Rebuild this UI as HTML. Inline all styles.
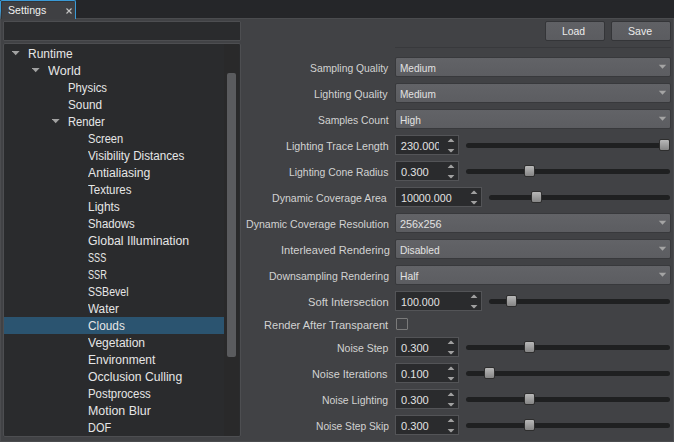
<!DOCTYPE html>
<html><head><meta charset="utf-8"><style>
html,body{margin:0;padding:0;}
body{width:674px;height:442px;position:relative;overflow:hidden;background:#414245;font-family:"Liberation Sans", sans-serif;}
.t{position:absolute;white-space:nowrap;line-height:normal;transform-origin:0 0;}
.tabbar{position:absolute;left:0;top:0;width:674px;height:18px;background:#252629;}
.tab{position:absolute;left:0;top:0;width:74px;height:18px;background:#3f4043;border:1px solid #3a9ad6;border-bottom:none;border-radius:2px 2px 0 0;box-shadow:inset 1px 1px 0 #333437;box-sizing:border-box;width:76px;height:19px;}
.win{position:absolute;left:0;top:18px;width:674px;height:424px;box-sizing:border-box;border:1px solid #4b4c4f;}
.search{position:absolute;left:3px;top:21px;width:238px;height:20px;box-sizing:border-box;background:#2a2b2d;border:1px solid #4d4e51;border-radius:1px;}
.tree{position:absolute;left:3px;top:43px;width:238px;height:394px;box-sizing:border-box;background:#2a2b2d;border:1px solid #4d4e51;border-radius:2px;overflow:hidden;}
.track{position:absolute;left:224px;top:44px;width:15px;height:392px;background:#29292a;}
.sbh{position:absolute;left:227px;top:73px;width:9px;height:284px;background:#5a5b5e;border-radius:2px;}
.tri{position:absolute;width:0;height:0;border-left:4px solid transparent;border-right:4px solid transparent;border-top:4px solid #a4a4a4;}
.btn{position:absolute;top:21px;width:60px;height:20px;box-sizing:border-box;background:linear-gradient(#606165,#5b5c60);border:1px solid #343538;border-radius:2px;}
.sep{position:absolute;left:395px;top:47px;width:276px;height:1px;background:#38393c;}
.combo{position:absolute;left:395px;width:276px;height:20px;box-sizing:border-box;background:linear-gradient(#626367,#5c5d61);border:1px solid #38393c;border-radius:2px;}
.carr{position:absolute;left:263px;top:7px;width:0;height:0;border-left:4px solid transparent;border-right:4px solid transparent;border-top:4px solid #a6a6a6;}
.spin{position:absolute;left:395px;height:20px;box-sizing:border-box;background:#2a2b2d;border:1px solid #535457;}
.up,.dn{position:absolute;right:4px;width:0;height:0;border-left:3.5px solid transparent;border-right:3.5px solid transparent;}
.up{top:2px;border-bottom:4px solid #a0a0a0;}
.dn{top:12px;border-top:4px solid #a0a0a0;}
.arr{position:absolute;}
.groove{position:absolute;height:5px;background:#1f2021;border-radius:2.5px;}
.handle{position:absolute;width:11px;height:12px;box-sizing:border-box;background:linear-gradient(#b8b8b8,#858585);border:1px solid #2e2e2e;border-radius:2px;}
.chk{position:absolute;left:396px;width:12px;height:12px;box-sizing:border-box;border:1px solid #7a7a7a;border-radius:1px;background:#404144;}
</style></head><body>
<div class="tabbar"></div>
<div class="win"></div>
<div class="tab"></div><div style="position:absolute;left:0;top:1px;width:1px;height:18px;background:linear-gradient(#3a9ad6 0%,#3a9ad6 55%,#4b5a66 100%)"></div>
<div class="t" style="left:7.8px;top:4px;font-size:11px;color:#f0f0f0;transform:scaleX(0.9616);">Settings</div>
<svg style="position:absolute;left:65px;top:7px" width="8" height="8"><path d="M1.5 1.5L6.5 6.5M6.5 1.5L1.5 6.5" stroke="#c4c4c4" stroke-width="1.1"/></svg>
<div class="search"></div>
<div class="tree"></div>
<div class="track"></div>
<div class="sbh"></div>
<div class="btn" style="left:545px"></div>
<div class="btn" style="left:611px"></div>
<div class="t" style="left:562.4px;top:25px;font-size:11px;color:#ececec;transform:scaleX(0.9444);">Load</div>
<div class="t" style="left:628.3px;top:25px;font-size:11px;color:#ececec;transform:scaleX(0.9617);">Save</div>
<div class="sep"></div>
<svg class="arr" style="left:12px;top:51px" width="9" height="6"><polygon points="-0.2,0 7.6,0 3.7,4.2" fill="#a2a2a2"/></svg>
<div class="t" style="left:28.0px;top:47px;font-size:12px;color:#e6e6e6;">Runtime</div>
<svg class="arr" style="left:32px;top:68px" width="9" height="6"><polygon points="-0.2,0 7.6,0 3.7,4.2" fill="#a2a2a2"/></svg>
<div class="t" style="left:48.0px;top:64px;font-size:12px;color:#e6e6e6;transform:scaleX(1.0511);">World</div>
<div class="t" style="left:68.0px;top:81px;font-size:12px;color:#e6e6e6;transform:scaleX(0.9433);">Physics</div>
<div class="t" style="left:68.0px;top:98px;font-size:12px;color:#e6e6e6;transform:scaleX(0.9816);">Sound</div>
<svg class="arr" style="left:52px;top:119px" width="9" height="6"><polygon points="-0.2,0 7.6,0 3.7,4.2" fill="#a2a2a2"/></svg>
<div class="t" style="left:68.0px;top:115px;font-size:12px;color:#e6e6e6;transform:scaleX(0.9349);">Render</div>
<div class="t" style="left:88.0px;top:132px;font-size:12px;color:#e6e6e6;transform:scaleX(0.9238);">Screen</div>
<div class="t" style="left:88.0px;top:149px;font-size:12px;color:#e6e6e6;transform:scaleX(0.9723);">Visibility Distances</div>
<div class="t" style="left:88.0px;top:166px;font-size:12px;color:#e6e6e6;transform:scaleX(1.0165);">Antialiasing</div>
<div class="t" style="left:88.0px;top:183px;font-size:12px;color:#e6e6e6;transform:scaleX(0.9592);">Textures</div>
<div class="t" style="left:88.0px;top:200px;font-size:12px;color:#e6e6e6;transform:scaleX(0.9931);">Lights</div>
<div class="t" style="left:88.0px;top:217px;font-size:12px;color:#e6e6e6;transform:scaleX(0.9460);">Shadows</div>
<div class="t" style="left:88.0px;top:234px;font-size:12px;color:#e6e6e6;transform:scaleX(1.0250);">Global Illumination</div>
<div class="t" style="left:88.0px;top:251px;font-size:12px;color:#e6e6e6;transform:scaleX(0.7581);">SSS</div>
<div class="t" style="left:88.0px;top:268px;font-size:12px;color:#e6e6e6;transform:scaleX(0.7638);">SSR</div>
<div class="t" style="left:88.0px;top:285px;font-size:12px;color:#e6e6e6;transform:scaleX(0.8818);">SSBevel</div>
<div class="t" style="left:88.0px;top:302px;font-size:12px;color:#e6e6e6;transform:scaleX(0.9758);">Water</div>
<div style="position:absolute;left:4px;top:317px;width:220px;height:17px;background:#2b5470"></div>
<div class="t" style="left:88.0px;top:319px;font-size:12px;color:#e6e6e6;transform:scaleX(0.9852);">Clouds</div>
<div class="t" style="left:88.0px;top:336px;font-size:12px;color:#e6e6e6;transform:scaleX(1.0063);">Vegetation</div>
<div class="t" style="left:88.0px;top:353px;font-size:12px;color:#e6e6e6;">Environment</div>
<div class="t" style="left:88.0px;top:370px;font-size:12px;color:#e6e6e6;transform:scaleX(1.0159);">Occlusion Culling</div>
<div class="t" style="left:88.0px;top:387px;font-size:12px;color:#e6e6e6;transform:scaleX(0.9511);">Postprocess</div>
<div class="t" style="left:88.0px;top:404px;font-size:12px;color:#e6e6e6;transform:scaleX(1.0347);">Motion Blur</div>
<div class="t" style="left:88.0px;top:421px;font-size:12px;color:#e6e6e6;transform:scaleX(0.9120);">DOF</div>
<div class="t" style="left:309.7px;top:62px;font-size:11px;color:#d2d2d2;transform:scaleX(0.9408);">Sampling Quality</div>
<div class="combo" style="top:57px"></div><svg class="arr" style="left:658px;top:64px" width="10" height="6"><polygon points="0.8,0.8 8.2,0.8 4.5,4.8" fill="#a4a4a4"/></svg>
<div class="t" style="left:399.6px;top:62px;font-size:11px;color:#e2e2e2;transform:scaleX(0.9138);">Medium</div>
<div class="t" style="left:314.4px;top:88px;font-size:11px;color:#d2d2d2;transform:scaleX(0.9696);">Lighting Quality</div>
<div class="combo" style="top:83px"></div><svg class="arr" style="left:658px;top:90px" width="10" height="6"><polygon points="0.8,0.8 8.2,0.8 4.5,4.8" fill="#a4a4a4"/></svg>
<div class="t" style="left:399.6px;top:88px;font-size:11px;color:#e2e2e2;transform:scaleX(0.9138);">Medium</div>
<div class="t" style="left:317.8px;top:114px;font-size:11px;color:#d2d2d2;transform:scaleX(0.9395);">Samples Count</div>
<div class="combo" style="top:109px"></div><svg class="arr" style="left:658px;top:116px" width="10" height="6"><polygon points="0.8,0.8 8.2,0.8 4.5,4.8" fill="#a4a4a4"/></svg>
<div class="t" style="left:399.6px;top:114px;font-size:11px;color:#e2e2e2;transform:scaleX(0.9242);">High</div>
<div class="t" style="left:285.6px;top:140px;font-size:11px;color:#d2d2d2;transform:scaleX(0.9709);">Lighting Trace Length</div>
<div class="spin" style="top:135px;width:64px"></div><svg class="arr" style="left:447px;top:138px" width="9" height="16"><polygon points="0.6,4 7.4,4 4.4,0.8 3.6,0.8" fill="#a0a0a0"/><polygon points="0.6,11 7.4,11 4.4,14.2 3.6,14.2" fill="#a0a0a0"/></svg>
<div style="position:absolute;left:396px;top:136px;width:43px;height:18px;overflow:hidden"><div class="t" style="left:4.8px;top:4px;font-size:11px;color:#e2e2e2;">230.000</div></div>
<div class="groove" style="left:466px;top:143px;width:204px"></div>
<div class="handle" style="left:659px;top:139px"></div>
<div class="t" style="left:288.6px;top:166px;font-size:11px;color:#d2d2d2;transform:scaleX(0.9443);">Lighting Cone Radius</div>
<div class="spin" style="top:161px;width:64px"></div><svg class="arr" style="left:447px;top:164px" width="9" height="16"><polygon points="0.6,4 7.4,4 4.4,0.8 3.6,0.8" fill="#a0a0a0"/><polygon points="0.6,11 7.4,11 4.4,14.2 3.6,14.2" fill="#a0a0a0"/></svg>
<div class="t" style="left:400.8px;top:166px;font-size:11px;color:#e2e2e2;transform:scaleX(1.0070);">0.300</div>
<div class="groove" style="left:466px;top:169px;width:204px"></div>
<div class="handle" style="left:524px;top:165px"></div>
<div class="t" style="left:272.3px;top:192px;font-size:11px;color:#d2d2d2;transform:scaleX(0.9618);">Dynamic Coverage Area</div>
<div class="spin" style="top:187px;width:87px"></div><svg class="arr" style="left:470px;top:190px" width="9" height="16"><polygon points="0.6,4 7.4,4 4.4,0.8 3.6,0.8" fill="#a0a0a0"/><polygon points="0.6,11 7.4,11 4.4,14.2 3.6,14.2" fill="#a0a0a0"/></svg>
<div class="t" style="left:400.8px;top:192px;font-size:11px;color:#e2e2e2;transform:scaleX(0.9734);">10000.000</div>
<div class="groove" style="left:489px;top:195px;width:181px"></div>
<div class="handle" style="left:531px;top:191px"></div>
<div class="t" style="left:245.6px;top:218px;font-size:11px;color:#d2d2d2;transform:scaleX(0.9619);">Dynamic Coverage Resolution</div>
<div class="combo" style="top:213px"></div><svg class="arr" style="left:658px;top:220px" width="10" height="6"><polygon points="0.8,0.8 8.2,0.8 4.5,4.8" fill="#a4a4a4"/></svg>
<div class="t" style="left:399.6px;top:218px;font-size:11px;color:#e2e2e2;transform:scaleX(0.9836);">256x256</div>
<div class="t" style="left:280.7px;top:244px;font-size:11px;color:#d2d2d2;transform:scaleX(1.0054);">Interleaved Rendering</div>
<div class="combo" style="top:239px"></div><svg class="arr" style="left:658px;top:246px" width="10" height="6"><polygon points="0.8,0.8 8.2,0.8 4.5,4.8" fill="#a4a4a4"/></svg>
<div class="t" style="left:399.6px;top:244px;font-size:11px;color:#e2e2e2;transform:scaleX(0.9254);">Disabled</div>
<div class="t" style="left:268.5px;top:270px;font-size:11px;color:#d2d2d2;transform:scaleX(0.9528);">Downsampling Rendering</div>
<div class="combo" style="top:265px"></div><svg class="arr" style="left:658px;top:272px" width="10" height="6"><polygon points="0.8,0.8 8.2,0.8 4.5,4.8" fill="#a4a4a4"/></svg>
<div class="t" style="left:399.6px;top:270px;font-size:11px;color:#e2e2e2;transform:scaleX(0.9363);">Half</div>
<div class="t" style="left:307.9px;top:296px;font-size:11px;color:#d2d2d2;transform:scaleX(1.0142);">Soft Intersection</div>
<div class="spin" style="top:291px;width:87px"></div><svg class="arr" style="left:470px;top:294px" width="9" height="16"><polygon points="0.6,4 7.4,4 4.4,0.8 3.6,0.8" fill="#a0a0a0"/><polygon points="0.6,11 7.4,11 4.4,14.2 3.6,14.2" fill="#a0a0a0"/></svg>
<div class="t" style="left:400.8px;top:296px;font-size:11px;color:#e2e2e2;transform:scaleX(0.9711);">100.000</div>
<div class="groove" style="left:489px;top:299px;width:181px"></div>
<div class="handle" style="left:506px;top:295px"></div>
<div class="t" style="left:263.5px;top:319px;font-size:11px;color:#d2d2d2;transform:scaleX(1.0051);">Render After Transparent</div>
<div class="chk" style="top:318px"></div>
<div class="t" style="left:337.3px;top:342px;font-size:11px;color:#d2d2d2;transform:scaleX(0.9518);">Noise Step</div>
<div class="spin" style="top:337px;width:64px"></div><svg class="arr" style="left:447px;top:340px" width="9" height="16"><polygon points="0.6,4 7.4,4 4.4,0.8 3.6,0.8" fill="#a0a0a0"/><polygon points="0.6,11 7.4,11 4.4,14.2 3.6,14.2" fill="#a0a0a0"/></svg>
<div class="t" style="left:400.8px;top:342px;font-size:11px;color:#e2e2e2;transform:scaleX(1.0070);">0.300</div>
<div class="groove" style="left:466px;top:345px;width:204px"></div>
<div class="handle" style="left:524px;top:341px"></div>
<div class="t" style="left:312.4px;top:368px;font-size:11px;color:#d2d2d2;transform:scaleX(0.9880);">Noise Iterations</div>
<div class="spin" style="top:363px;width:64px"></div><svg class="arr" style="left:447px;top:366px" width="9" height="16"><polygon points="0.6,4 7.4,4 4.4,0.8 3.6,0.8" fill="#a0a0a0"/><polygon points="0.6,11 7.4,11 4.4,14.2 3.6,14.2" fill="#a0a0a0"/></svg>
<div class="t" style="left:400.8px;top:368px;font-size:11px;color:#e2e2e2;transform:scaleX(1.0070);">0.100</div>
<div class="groove" style="left:466px;top:371px;width:204px"></div>
<div class="handle" style="left:484px;top:367px"></div>
<div class="t" style="left:322.4px;top:394px;font-size:11px;color:#d2d2d2;transform:scaleX(0.9484);">Noise Lighting</div>
<div class="spin" style="top:389px;width:64px"></div><svg class="arr" style="left:447px;top:392px" width="9" height="16"><polygon points="0.6,4 7.4,4 4.4,0.8 3.6,0.8" fill="#a0a0a0"/><polygon points="0.6,11 7.4,11 4.4,14.2 3.6,14.2" fill="#a0a0a0"/></svg>
<div class="t" style="left:400.8px;top:394px;font-size:11px;color:#e2e2e2;transform:scaleX(1.0070);">0.300</div>
<div class="groove" style="left:466px;top:397px;width:204px"></div>
<div class="handle" style="left:524px;top:393px"></div>
<div class="t" style="left:315.6px;top:420px;font-size:11px;color:#d2d2d2;transform:scaleX(0.9316);">Noise Step Skip</div>
<div class="spin" style="top:415px;width:64px"></div><svg class="arr" style="left:447px;top:418px" width="9" height="16"><polygon points="0.6,4 7.4,4 4.4,0.8 3.6,0.8" fill="#a0a0a0"/><polygon points="0.6,11 7.4,11 4.4,14.2 3.6,14.2" fill="#a0a0a0"/></svg>
<div class="t" style="left:400.8px;top:420px;font-size:11px;color:#e2e2e2;transform:scaleX(1.0070);">0.300</div>
<div class="groove" style="left:466px;top:423px;width:204px"></div>
<div class="handle" style="left:524px;top:419px"></div>
</body></html>
